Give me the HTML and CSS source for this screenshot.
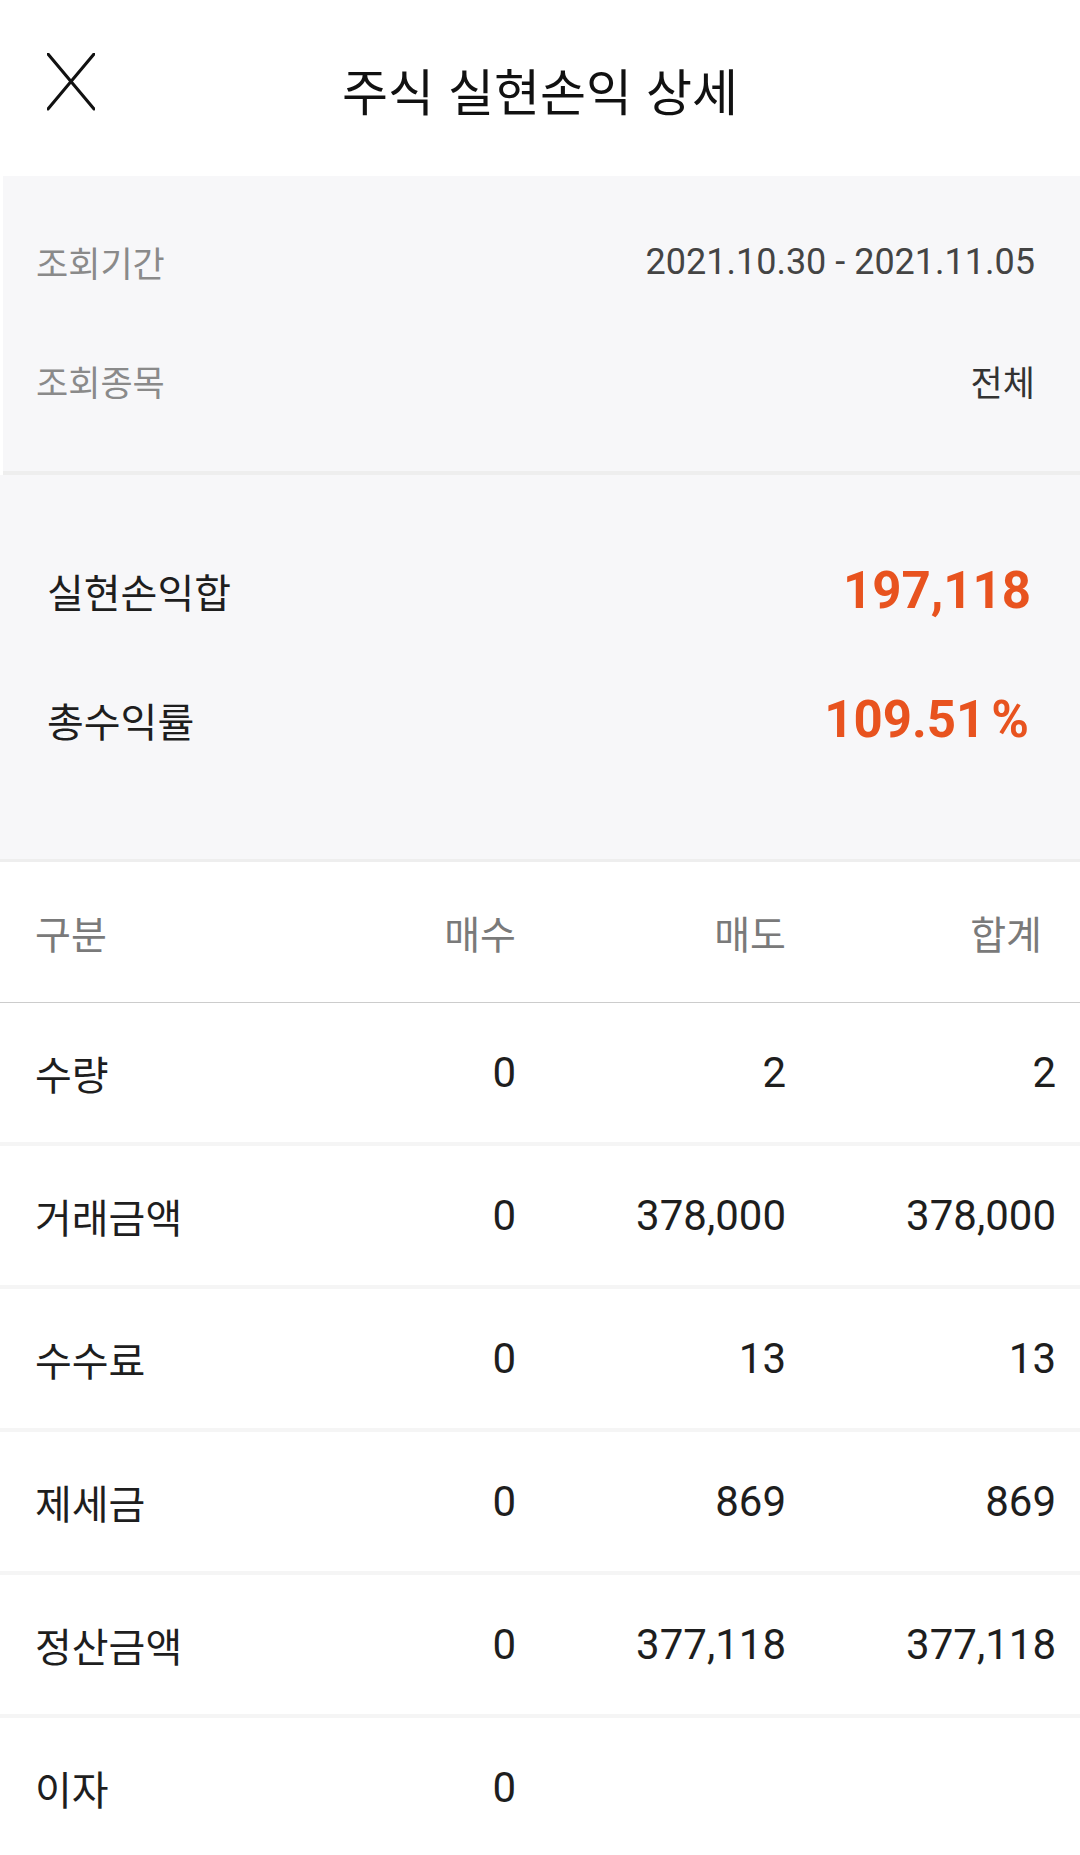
FILE: index.html
```html
<!DOCTYPE html>
<html lang="ko">
<head>
    <meta charset="UTF-8">
    <meta name="viewport" content="width=device-width, initial-scale=1.0">
    <title>주식 실현손익 상세</title>
    <link rel="stylesheet" href="styles.css">
</head>
<body>
    <div class="page">
        <header class="top-bar">
            <div class="close-btn">
                <svg width="48" height="58" viewBox="0 0 48 58">
                    <path d="M1 1 L47 56 M47 1 L1 56" stroke="#111" stroke-width="3" stroke-linecap="round" fill="none"/>
                </svg>
            </div>
            <h1 class="title">주식 실현손익 상세</h1>
            <div></div>
        </header>

        <section class="query-info">
            <div class="info-row">
                <span class="info-label">조회기간</span>
                <span class="info-value num">2021.10.30 - 2021.11.05</span>
            </div>
            <div class="info-row">
                <span class="info-label">조회종목</span>
                <span class="info-value">전체</span>
            </div>
        </section>

        <section class="summary">
            <div class="summary-row">
                <span class="summary-label">실현손익합</span>
                <span class="summary-value">197,118</span>
            </div>
            <div class="summary-row">
                <span class="summary-label">총수익률</span>
                <span class="summary-value">109.51<span class="pct">%</span></span>
            </div>
        </section>

        <section class="detail-table">
            <div class="table-head">
                <span>구분</span>
                <span class="right">매수</span>
                <span class="right">매도</span>
                <span class="right last">합계</span>
            </div>
            <div id="tableRows"></div>
        </section>
    </div>

    <script>
        const rows = [
            { name: '수량', buy: '0', sell: '2', total: '2' },
            { name: '거래금액', buy: '0', sell: '378,000', total: '378,000' },
            { name: '수수료', buy: '0', sell: '13', total: '13' },
            { name: '제세금', buy: '0', sell: '869', total: '869' },
            { name: '정산금액', buy: '0', sell: '377,118', total: '377,118' },
            { name: '이자', buy: '0', sell: '', total: '' }
        ];

        const tableRows = document.getElementById('tableRows');
        rows.forEach(row => {
            const rowDiv = document.createElement('div');
            rowDiv.className = 'table-row';
            rowDiv.innerHTML = `
                <span class="row-name">${row.name}</span>
                <span class="num">${row.buy}</span>
                <span class="num">${row.sell}</span>
                <span class="num">${row.total}</span>
            `;
            tableRows.appendChild(rowDiv);
        });
    </script>
</body>
</html>
```

FILE: styles.css
```css
body {
    margin: 0;
    background: #ffffff;
    font-family: "Noto Sans CJK KR", Roboto, sans-serif;
    color: #222;
}
.page {
    width: 1080px;
    height: 1855px;
    overflow: hidden;
}
.top-bar {
    height: 176px;
    display: grid;
    grid-template-columns: 1fr auto 1fr;
    align-items: center;
}
.close-btn {
    padding-left: 47px;
    padding-bottom: 12px;
    display: flex;
}
.title {
    margin: 0;
    font-size: 50px;
    font-weight: 400;
    color: #111;
    line-height: 1.2;
    padding-top: 2px;
}
.query-info {
    margin-left: 3px;
    background: #f7f7f9;
    padding: 26px 45px 31px 33px;
    border-bottom: 4px solid #eeeeee;
}
.info-row {
    height: 119px;
    display: flex;
    justify-content: space-between;
    align-items: center;
}
.info-label {
    font-size: 35px;
    color: #8a8a8a;
}
.info-value {
    font-size: 35px;
    color: #333;
}
.info-value.num {
    font-family: Roboto, sans-serif;
    font-size: 36px;
    color: #444;
}
.summary {
    background: #f7f7f9;
    padding: 51px 49px 75px 47px;
    border-bottom: 3px solid #eeeeee;
}
.summary-row {
    height: 129px;
    display: flex;
    justify-content: space-between;
    align-items: center;
}
.summary-label {
    font-size: 40px;
    color: #1e1e1e;
}
.summary-value {
    font-family: Roboto, sans-serif;
    font-weight: 700;
    font-size: 51px;
    color: #e8531f;
}
.summary-value .pct {
    margin-left: 6px;
    letter-spacing: 2px;
}
.table-head, .table-row {
    display: grid;
    grid-template-columns: 1fr 170px 270px 270px;
    align-items: center;
    padding: 0 24px 0 35px;
}
.table-head {
    height: 140px;
    border-bottom: 1px solid #cccccc;
    font-size: 39px;
    color: #7a7a7a;
}
.table-head .right {
    text-align: right;
}
.table-head .last {
    padding-right: 14px;
}
.table-row {
    height: 139px;
    border-bottom: 4px solid #f5f5f5;
}
.row-name {
    font-size: 40px;
    color: #1e1e1e;
}
.num {
    text-align: right;
    font-family: Roboto, sans-serif;
    font-size: 42px;
    color: #1e1e1e;
}
```
